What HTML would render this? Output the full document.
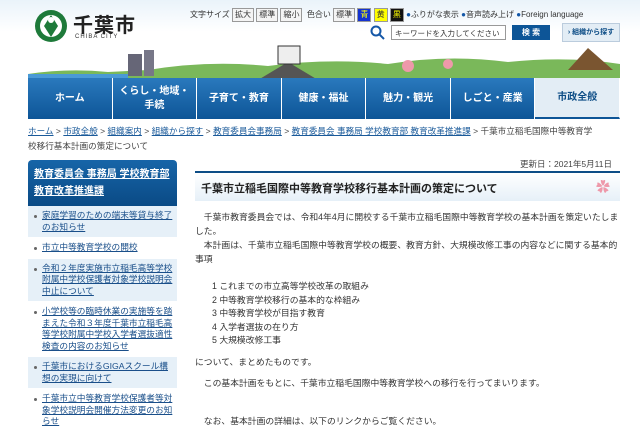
<!DOCTYPE html>
<html><head><meta charset="utf-8"><style>
*{margin:0;padding:0;box-sizing:border-box}
body{width:640px;height:426px;overflow:hidden;background:#fff;font-family:"Liberation Sans","Noto Sans CJK JP",sans-serif;color:#333;position:relative}
.a{position:absolute}
.hdr{left:0;top:0;width:640px;height:80px;background:linear-gradient(#eaf3fa,#fff 40%)}
.btn{display:inline-block;border:1px solid #999;background:#f4f4f4;font-size:8px;padding:1px 2px;line-height:10px}
.nav{left:28px;top:78px;width:592px;height:41px;display:flex}
.nav div{flex:1;background:linear-gradient(#2a79bd,#0d5597);color:#fff;font-size:10px;font-weight:bold;display:flex;align-items:center;justify-content:center;text-align:center;border-right:1px solid #fff;line-height:14px}
.nav div.on{background:#e3edf5;color:#0d4d86;border-bottom:2px solid #0d5597}
.bc{left:28px;top:124px;width:600px;font-size:8.6px;line-height:15px;color:#444}
.bc u{color:#1a5a9a}
.side{left:28px;top:160px;width:149px}
.sh{background:linear-gradient(#1765a8,#0a4a85);color:#fff;font-size:10px;font-weight:bold;padding:6px 6px;line-height:17px;border-radius:4px 4px 0 0;text-decoration:underline;height:46px}
.si{font-size:8.7px;line-height:11.5px;color:#1a4f8a;text-decoration:underline;padding:4px 4px 4px 14px;position:relative;border-bottom:1px solid #fff}
.si:before{content:"";position:absolute;left:6px;top:9px;width:3px;height:3px;background:#666;border-radius:50%}
.si.b{background:#e6f0f8}
.t{left:195px;font-size:8.8px;line-height:14px;color:#333}
</style></head><body>
<div class="a hdr"></div>
<svg class="a" style="left:34px;top:9px" width="34" height="34" viewBox="0 0 34 34"><circle cx="17" cy="17" r="16" fill="#1e7a3a"/><circle cx="17" cy="17" r="11" fill="#fff"/><path d="M17 6 L24 17 L17 28 L10 17Z" fill="#1e7a3a"/><circle cx="17" cy="11" r="3" fill="#fff"/></svg>
<div class="a" style="left:73px;top:9px;font-size:20px;font-weight:bold;color:#222;letter-spacing:1px">千葉市</div>
<div class="a" style="left:75px;top:34px;font-size:6px;letter-spacing:1px;color:#333">CHIBA CITY</div>
<div class="a" style="left:190px;top:8px;font-size:8px;white-space:nowrap">文字サイズ <span class="btn">拡大</span> <span class="btn">標準</span> <span class="btn">縮小</span> &nbsp;色合い <span class="btn">標準</span> <span class="btn" style="background:#1533d0;color:#ff0">青</span> <span class="btn" style="background:#ff0">黄</span> <span class="btn" style="background:#111;color:#ff0">黒</span> <span style="color:#1457a7">●</span>ふりがな表示 <span style="color:#1457a7">●</span>音声読み上げ <span style="color:#1457a7">●</span>Foreign language</div>
<svg class="a" style="left:370px;top:25px" width="16" height="16"><circle cx="6" cy="6" r="4.5" fill="none" stroke="#1457a7" stroke-width="2"/><path d="M9 9 L14 14" stroke="#1457a7" stroke-width="2"/></svg>
<div class="a" style="left:391px;top:25px;width:115px;height:15px;border:1px solid #999;background:#fff;font-size:7.5px;padding:2px 3px;color:#333;white-space:nowrap;overflow:hidden">キーワードを入力してください</div>
<div class="a" style="left:512px;top:25px;width:38px;height:15px;background:#0d5597;color:#fff;font-size:8px;font-weight:bold;text-align:center;line-height:15px">検 索</div>
<div class="a" style="left:562px;top:23px;width:58px;height:19px;background:#e3edf5;border:1px solid #bcd;font-size:7px;font-weight:bold;text-align:center;line-height:17px;color:#0d4d86">› 組織から探す</div>
<svg class="a" style="left:28px;top:40px" width="592" height="40"><path d="M0 40 L0 34 Q40 28 80 32 L120 30 Q180 20 240 26 Q300 18 360 24 Q420 14 480 22 Q540 16 592 24 L592 40Z" fill="#7ab85a"/><rect x="0" y="34" width="100" height="6" fill="#4a9ad6"/><rect x="100" y="14" width="14" height="22" fill="#667"/><rect x="116" y="10" width="10" height="26" fill="#778"/><path d="M230 40 L260 22 L290 40Z" fill="#555"/><rect x="250" y="6" width="22" height="18" fill="#eee" stroke="#333"/><path d="M540 30 L560 8 L585 30Z" fill="#7a5530"/><circle cx="380" cy="26" r="6" fill="#e9a"/><circle cx="420" cy="24" r="5" fill="#e9a"/></svg>
<div class="a nav"><div>ホーム</div><div>くらし・地域・<br>手続</div><div>子育て・教育</div><div>健康・福祉</div><div>魅力・観光</div><div>しごと・産業</div><div class="on">市政全般</div></div>
<div class="a bc"><u>ホーム</u> &gt; <u>市政全般</u> &gt; <u>組織案内</u> &gt; <u>組織から探す</u> &gt; <u>教育委員会事務局</u> &gt; <u>教育委員会 事務局 学校教育部 教育改革推進課</u> &gt; 千葉市立稲毛国際中等教育学<br>校移行基本計画の策定について</div>
<div class="a side">
<div class="sh">教育委員会 事務局 学校教育部 教育改革推進課</div>
<div class="si b">家庭学習のための端末等貸与終了のお知らせ</div>
<div class="si">市立中等教育学校の開校</div>
<div class="si b">令和２年度実施市立稲毛高等学校附属中学校保護者対象学校説明会中止について</div>
<div class="si">小学校等の臨時休業の実施等を踏まえた令和３年度千葉市立稲毛高等学校附属中学校入学者選抜適性検査の内容のお知らせ</div>
<div class="si b">千葉市におけるGIGAスクール構想の実現に向けて</div>
<div class="si">千葉市立中等教育学校保護者等対象学校説明会開催方法変更のお知らせ</div>
</div>
<div class="a" style="left:520px;top:158px;font-size:8.5px;color:#444">更新日：2021年5月11日</div>
<div class="a" style="left:195px;top:171px;width:425px;height:30px;border-top:2px solid #0d4d86;background:linear-gradient(#fff,#e6f0f8);font-size:11px;font-weight:bold;padding:7px 6px;color:#222">千葉市立稲毛国際中等教育学校移行基本計画の策定について</div>
<div class="a" style="left:596px;top:177px;font-size:14px;color:#e9a">✿</div>
<div class="a t" style="top:210px;width:425px">　千葉市教育委員会では、令和4年4月に開校する千葉市立稲毛国際中等教育学校の基本計画を策定いたしました。</div>
<div class="a t" style="top:238px;width:425px">　本計画は、千葉市立稲毛国際中等教育学校の概要、教育方針、大規模改修工事の内容などに関する基本的事項</div>
<div class="a t" style="left:212px;top:280px;line-height:13.6px">1 これまでの市立高等学校改革の取組み<br>2 中等教育学校移行の基本的な枠組み<br>3 中等教育学校が目指す教育<br>4 入学者選抜の在り方<br>5 大規模改修工事</div>
<div class="a t" style="top:355px">について、まとめたものです。</div>
<div class="a t" style="top:376px">　この基本計画をもとに、千葉市立稲毛国際中等教育学校への移行を行ってまいります。</div>
<div class="a t" style="top:414px">　なお、基本計画の詳細は、以下のリンクからご覧ください。</div>
</body></html>
